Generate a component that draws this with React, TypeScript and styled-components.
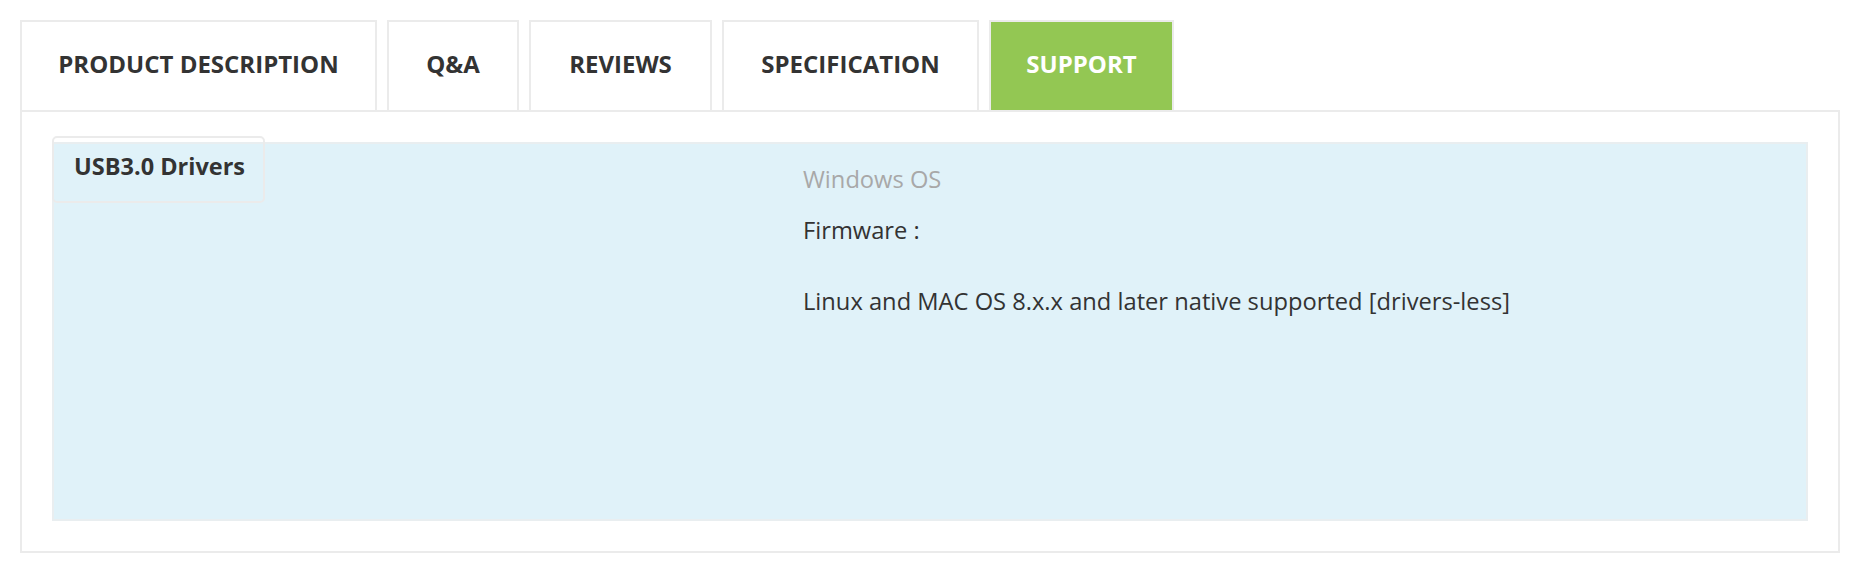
import React from "react";
import styled, { createGlobalStyle } from "styled-components";

const GlobalStyle = createGlobalStyle`
  html, body {
    margin: 0;
    padding: 0;
    background: #ffffff;
  }
  body {
    font-family: "Open Sans", "Noto Sans", "DejaVu Sans", sans-serif;
    color: #333333;
  }
  * { box-sizing: border-box; }
`;

const Page = styled.div`
  width: 1866px;
  padding: 20px 26px 0 20px;
`;

const TabBar = styled.div`
  display: flex;
  gap: 10px;
  height: 90px;
`;

const Tab = styled.div<{ $w: number; $active?: boolean }>`
  width: ${(p) => p.$w}px;
  height: 90px;
  display: flex;
  align-items: center;
  justify-content: center;
  border: 2px solid #ebebeb;
  border-bottom: none;
  background: ${(p) => (p.$active ? "#93c753" : "#ffffff")};
  color: ${(p) => (p.$active ? "#ffffff" : "#333333")};
  font-family: "Open Sans", sans-serif;
  font-weight: 700;
  font-size: 24px;
  padding-bottom: 6px;
  white-space: nowrap;
`;

const Panel = styled.div`
  border: 2px solid #ebebeb;
  padding: 30px;
`;

const InfoBox = styled.div`
  display: flex;
  height: 379px;
  background: #e0f2f9;
  border: 2px solid #e9eef0;
`;

const SideColumn = styled.div`
  flex: 0 0 749px;
`;

const DriverLabel = styled.div`
  width: 213px;
  height: 67px;
  margin: -8px 0 0 -2px;
  padding: 12px 0 0 20px;
  border: 2px solid #ebebeb;
  border-radius: 5px;
  font-weight: 700;
  font-size: 23.5px;
  line-height: 33px;
  color: #333333;
  white-space: nowrap;
`;

const Content = styled.div`
  flex: 1;
  padding-top: 20px;
  font-size: 23.7px;
`;

const OsTitle = styled.div`
  color: #a8a8a8;
  line-height: 30px;
  margin-bottom: 20px;
`;

const Line = styled.p<{ $gap?: number }>`
  margin: 0 0 ${(p) => p.$gap ?? 0}px 0;
  line-height: 32px;
  color: #333333;
`;

const tabs = [
  { label: "PRODUCT DESCRIPTION", w: 357 },
  { label: "Q&A", w: 132 },
  { label: "REVIEWS", w: 183 },
  { label: "SPECIFICATION", w: 257 },
  { label: "SUPPORT", w: 185, active: true },
];

export default function App() {
  return (
    <>
      <GlobalStyle />
      <Page>
        <TabBar>
          {tabs.map((t) => (
            <Tab key={t.label} $w={t.w} $active={t.active}>
              {t.label}
            </Tab>
          ))}
        </TabBar>
        <Panel>
          <InfoBox>
            <SideColumn>
              <DriverLabel>USB3.0 Drivers</DriverLabel>
            </SideColumn>
            <Content>
              <OsTitle>Windows OS</OsTitle>
              <Line $gap={39}>Firmware :</Line>
              <Line>Linux and MAC OS 8.x.x and later native supported [drivers-less]</Line>
            </Content>
          </InfoBox>
        </Panel>
      </Page>
    </>
  );
}
